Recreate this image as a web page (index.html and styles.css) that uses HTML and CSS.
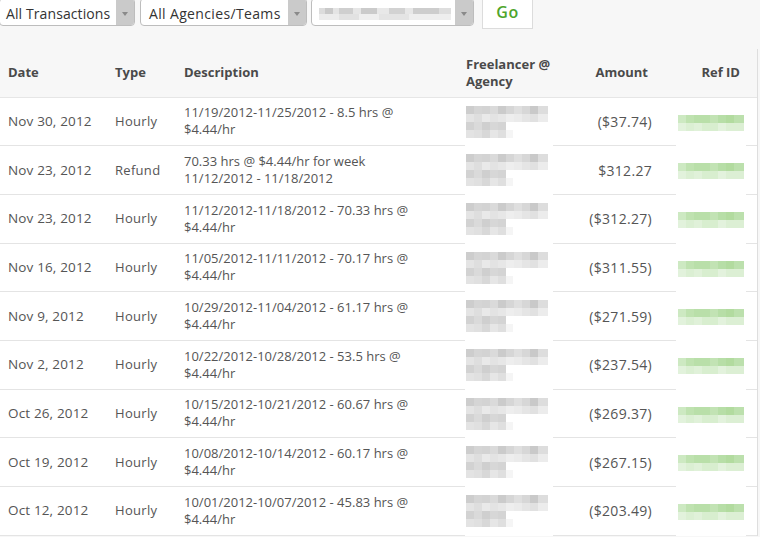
FILE: index.html
```html
<!DOCTYPE html>
<html>
<head>
<meta charset="utf-8">
<link rel="stylesheet" href="styles.css">
</head>
<body>
<div class="filters">
  <div class="select s1"><span class="label">All Transactions</span><span class="arrow"><span class="tri"></span></span></div>
  <div class="select s2"><span class="label">All Agencies/Teams</span><span class="arrow"><span class="tri"></span></span></div>
  <div class="select s3"><span class="label"><span class="blurtext"></span></span><span class="arrow"><span class="tri"></span></span></div>
  <button class="go">Go</button>
</div>
<div class="table">
  <div class="row head">
    <div class="cell">Date</div>
    <div class="cell">Type</div>
    <div class="cell">Description</div>
    <div class="cell">Freelancer @<br>Agency</div>
    <div class="cell amt">Amount</div>
    <div class="cell ref">Ref ID</div>
  </div>
  <div class="row">
    <div class="cell date">Nov 30, 2012</div><div class="cell type">Hourly</div>
    <div class="cell desc">11/19/2012-11/25/2012 - 8.5 hrs @ $4.44/hr</div>
    <div class="cell fl"><div class="cover"><div class="px"></div></div></div>
    <div class="cell amt">($37.74)</div>
    <div class="cell rid"><div class="cover gcover"><div class="gpx"></div></div></div>
  </div>
  <div class="row">
    <div class="cell date">Nov 23, 2012</div><div class="cell type">Refund</div>
    <div class="cell desc">70.33 hrs @ $4.44/hr for week 11/12/2012 - 11/18/2012</div>
    <div class="cell fl"><div class="cover"><div class="px"></div></div></div>
    <div class="cell amt">$312.27</div>
    <div class="cell rid"><div class="cover gcover"><div class="gpx"></div></div></div>
  </div>
  <div class="row">
    <div class="cell date">Nov 23, 2012</div><div class="cell type">Hourly</div>
    <div class="cell desc">11/12/2012-11/18/2012 - 70.33 hrs @ $4.44/hr</div>
    <div class="cell fl"><div class="cover"><div class="px"></div></div></div>
    <div class="cell amt">($312.27)</div>
    <div class="cell rid"><div class="cover gcover"><div class="gpx"></div></div></div>
  </div>
  <div class="row">
    <div class="cell date">Nov 16, 2012</div><div class="cell type">Hourly</div>
    <div class="cell desc">11/05/2012-11/11/2012 - 70.17 hrs @ $4.44/hr</div>
    <div class="cell fl"><div class="cover"><div class="px"></div></div></div>
    <div class="cell amt">($311.55)</div>
    <div class="cell rid"><div class="cover gcover"><div class="gpx"></div></div></div>
  </div>
  <div class="row">
    <div class="cell date">Nov 9, 2012</div><div class="cell type">Hourly</div>
    <div class="cell desc">10/29/2012-11/04/2012 - 61.17 hrs @ $4.44/hr</div>
    <div class="cell fl"><div class="cover"><div class="px"></div></div></div>
    <div class="cell amt">($271.59)</div>
    <div class="cell rid"><div class="cover gcover"><div class="gpx"></div></div></div>
  </div>
  <div class="row">
    <div class="cell date">Nov 2, 2012</div><div class="cell type">Hourly</div>
    <div class="cell desc">10/22/2012-10/28/2012 - 53.5 hrs @ $4.44/hr</div>
    <div class="cell fl"><div class="cover"><div class="px"></div></div></div>
    <div class="cell amt">($237.54)</div>
    <div class="cell rid"><div class="cover gcover"><div class="gpx"></div></div></div>
  </div>
  <div class="row">
    <div class="cell date">Oct 26, 2012</div><div class="cell type">Hourly</div>
    <div class="cell desc">10/15/2012-10/21/2012 - 60.67 hrs @ $4.44/hr</div>
    <div class="cell fl"><div class="cover"><div class="px"></div></div></div>
    <div class="cell amt">($269.37)</div>
    <div class="cell rid"><div class="cover gcover"><div class="gpx"></div></div></div>
  </div>
  <div class="row">
    <div class="cell date">Oct 19, 2012</div><div class="cell type">Hourly</div>
    <div class="cell desc">10/08/2012-10/14/2012 - 60.17 hrs @ $4.44/hr</div>
    <div class="cell fl"><div class="cover"><div class="px"></div></div></div>
    <div class="cell amt">($267.15)</div>
    <div class="cell rid"><div class="cover gcover"><div class="gpx"></div></div></div>
  </div>
  <div class="row">
    <div class="cell date">Oct 12, 2012</div><div class="cell type">Hourly</div>
    <div class="cell desc">10/01/2012-10/07/2012 - 45.83 hrs @ $4.44/hr</div>
    <div class="cell fl"><div class="cover"><div class="px"></div></div></div>
    <div class="cell amt">($203.49)</div>
    <div class="cell rid"><div class="cover gcover"><div class="gpx"></div></div></div>
  </div>
</div>
</body>
</html>
```
FILE: styles.css
```css
html, body {
  margin: 0;
  padding: 0;
  background: #f7f7f7;
  font-family: "Open Sans", "Liberation Sans", sans-serif;
  color: #555;
  font-size: 13px;
}
.filters {
  display: flex;
  align-items: flex-start;
  height: 51px;
  margin-top: -2px;
}
.select {
  display: flex;
  height: 28px;
  box-sizing: border-box;
  border: 1px solid #bdbdbd;
  border-radius: 4px;
  background: #fff;
  overflow: hidden;
  margin-right: 5px;
}
.s1 { width: 136px; margin-left: -1px; }
.s2 { width: 167px; }
.s3 { width: 163px; margin-left: -1px; }
.select .label {
  flex: 1;
  display: flex;
  align-items: center;
  padding: 3px 0 0 6px;
  color: #333;
  font-size: 14px;
  letter-spacing: 0.1px;
  white-space: nowrap;
}
.s2 .label { padding-left: 8px; letter-spacing: 0.35px; }
.s3 .label { padding-left: 7px; }
.select .arrow {
  width: 18px;
  background: #cacaca;
  display: flex;
  align-items: center;
  justify-content: center;
  padding-top: 3px;
}
.tri {
  width: 0;
  height: 0;
  border-left: 3px solid transparent;
  border-right: 3px solid transparent;
  border-top: 4px solid #8a8a8a;
}
.blurtext {
  display: block;
  width: 132px;
  height: 12px;
  background:
    linear-gradient(to right, #dcdcdc 0 6px, #c9c9c9 6px 14px, #e4e4e4 14px 20px, #cfcfcf 20px 34px, #e6e6e6 34px 42px, #cbcbcb 42px 58px, #e8e8e8 58px 70px, #d2d2d2 70px 86px, #e7e7e7 86px 94px, #cdcdcd 94px 120px, #dedede 120px 132px) 0 0 / 100% 6px no-repeat,
    linear-gradient(to right, #ececec 0 20px, #e2e2e2 20px 40px, #efefef 40px 60px, #e4e4e4 60px 90px, #eeeeee 90px 132px) 0 6px / 100% 6px no-repeat;
}
.go {
  margin-left: 3px;
  width: 51px;
  height: 31px;
  box-sizing: border-box;
  border: 1px solid #dcdcdc;
  background: #fff;
  color: #4ea52c;
  font-family: "Open Sans", "Liberation Sans", sans-serif;
  font-size: 16px;
  font-weight: 600;
  letter-spacing: 0.5px;
  padding: 0 0 3px;
}
.table {
  width: 757px;
  border-right: 1px solid #dedede;
}
.row {
  display: grid;
  grid-template-columns: 107px 69px 282px 105px 97px 97px;
}
.cell {
  box-sizing: border-box;
  height: 48.67px;
  padding: 0 8px;
  display: flex;
  align-items: center;
  border-bottom: 1px solid #e4e4e4;
  background: #fff;
  line-height: 17px;
}
.head .cell {
  background: #f7f7f7;
  font-weight: 700;
  color: #4a4a4a;
  border-bottom-color: #e6e6e6;
}
.date { font-size: 13.5px; letter-spacing: 0.15px; }
.type { letter-spacing: 0.3px; }
.desc { padding-right: 36px; }
.amt { justify-content: flex-end; font-size: 14px; letter-spacing: 0.3px; }
.head .amt { justify-content: flex-end; padding-right: 12px; font-size: 13px; letter-spacing: 0; }
.head .ref { justify-content: flex-end; padding-right: 17px; }
.fl, .rid {
  align-items: flex-start;
  padding: 0;
}
.cover {
  background: #fff;
  height: calc(100% + 1px);
  box-sizing: border-box;
}
.fl .cover {
  width: 88px;
  margin-left: 7px;
  padding: 8px 0 0 1px;
}
.px {
  width: 82px;
  height: 32px;
  background:
    linear-gradient(to right, #cdcdcd 0 8px, #d5d5d5 8px 16px, #d3d3d3 16px 24px, #dadada 24px 32px, #cbcbcb 32px 40px, #d6d6d6 40px 48px, #dfdfdf 48px 56px, #d7d7d7 56px 64px, #c9c9c9 64px 72px, #dddddd 72px 82px) 0 0 / 82px 8px no-repeat,
    linear-gradient(to right, #e4e4e4 0 8px, #dedede 8px 16px, #e9e9e9 16px 24px, #e3e3e3 24px 32px, #e7e7e7 32px 40px, #eeeeee 40px 48px, #ebebeb 48px 56px, #e5e5e5 56px 64px, #e1e1e1 64px 72px, #ececec 72px 82px) 0 8px / 82px 8px no-repeat,
    linear-gradient(to right, #d2d2d2 0 8px, #dadada 8px 16px, #cfcfcf 16px 24px, #d7d7d7 24px 32px, #d4d4d4 32px 40px) 0 16px / 40px 8px no-repeat,
    linear-gradient(to right, #e3e3e3 0 8px, #e0e0e0 8px 16px, #d8d8d8 16px 24px, #e6e6e6 24px 32px, #dfdfdf 32px 40px, #f5f5f5 40px 47px) 0 24px / 47px 8px no-repeat;
}
.rid .gcover {
  width: 70px;
  margin-left: 16px;
  padding: 17px 0 0 2px;
}
.gpx {
  width: 66px;
  height: 16px;
  background:
    linear-gradient(to right, #cde9c2 0 8px, #bfe2b0 8px 16px, #b9dfa9 16px 32px, #c2e3b4 32px 40px, #b7dea7 40px 48px, #b2db9f 48px 56px, #bce0ad 56px 66px) 0 0 / 66px 8px no-repeat,
    linear-gradient(to right, #e2f2dc 0 8px, #dbefd3 8px 16px, #e0f1d9 16px 24px, #d8eecf 24px 40px, #e3f2dd 40px 48px, #dcefd4 48px 66px) 0 8px / 66px 8px no-repeat;
}
```
